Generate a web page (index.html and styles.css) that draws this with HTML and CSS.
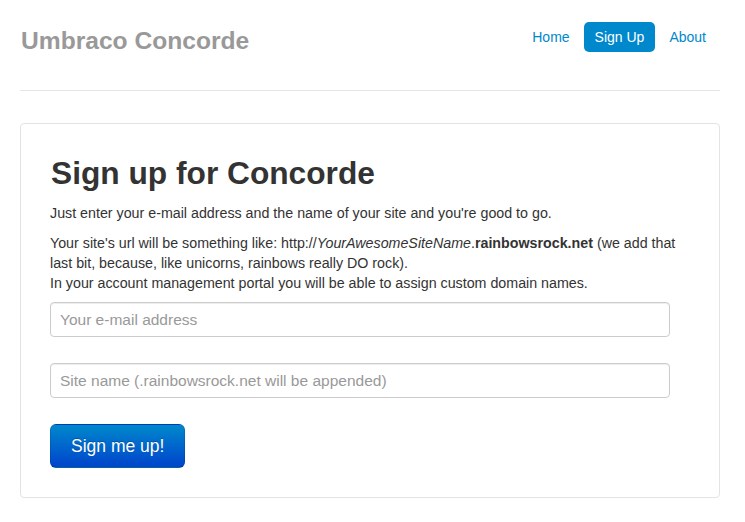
FILE: index.html
```html
<!DOCTYPE html>
<html>
<head>
<meta charset="utf-8">
<title>Umbraco Concorde</title>
<link rel="stylesheet" href="styles.css">
</head>
<body>
<div class="container">
  <header class="masthead">
    <h3 class="brand">Umbraco Concorde</h3>
    <ul class="nav-pills">
      <li><a href="#">Home</a></li>
      <li class="active"><a href="#">Sign Up</a></li>
      <li><a href="#">About</a></li>
    </ul>
  </header>
  <section class="card">
    <h2 class="title">Sign up for Concorde</h2>
    <p>Just enter your e-mail address and the name of your site and you're good to go.</p>
    <p>Your site's url will be something like: http://<em>YourAwesomeSiteName</em>.<strong>rainbowsrock.net</strong> (we add that last bit, because, like unicorns, rainbows really DO rock).<br>In your account management portal you will be able to assign custom domain names.</p>
    <form class="signup">
      <input class="field" type="text" placeholder="Your e-mail address">
      <input class="field" type="text" placeholder="Site name (.rainbowsrock.net will be appended)">
      <div><button class="btn-primary" type="button">Sign me up!</button></div>
    </form>
  </section>
</div>
</body>
</html>
```

FILE: styles.css
```css
* { box-sizing: border-box; }
html, body { margin: 0; padding: 0; background: #fff; }
body {
  font-family: "Liberation Sans", Arial, sans-serif;
  font-size: 14px;
  line-height: 20px;
  color: #333;
}
.container {
  width: 700px;
  margin-left: 20px;
}
.masthead {
  display: flex;
  justify-content: space-between;
  align-items: flex-start;
  padding: 21px 0 29px;
  border-bottom: 1px solid #e5e5e5;
}
.brand {
  margin: 0;
  font-size: 24.6px;
  line-height: 40px;
  font-weight: bold;
  color: #999;
  padding-left: 1px;
}
.nav-pills {
  list-style: none;
  margin: 1px 2px 0 0;
  padding: 0;
  display: flex;
}
.nav-pills li { margin-left: 2px; }
.nav-pills a {
  display: block;
  padding: 8px 12px;
  line-height: 14px;
  font-size: 14px;
  color: #0088cc;
  text-decoration: none;
  border-radius: 5px;
}
.nav-pills .active a {
  background: #0088cc;
  color: #fff;
  padding: 8px 11px;
}
.card {
  margin-top: 32px;
  border: 1px solid #e3e3e3;
  border-radius: 4px;
  background: #fff;
  padding: 29px;
}
.title {
  margin: 0 0 10px;
  padding-left: 1px;
  font-size: 31.7px;
  line-height: 40px;
  font-weight: bold;
  color: #333;
}
.card p { margin: 0 0 10px; font-size: 14.25px; }
.signup {
  display: flex;
  flex-direction: column;
  gap: 26px;
  margin-top: -1px;
}
.field {
  width: 620px;
  height: 35px;
  padding: 0 9px;
  border: 1px solid #ccc;
  border-radius: 4px;
  font-family: "Liberation Sans", Arial, sans-serif;
  font-size: 15.5px;
  color: #555;
  background: #fff;
  box-shadow: inset 0 1px 1px rgba(0,0,0,0.075);
}
.field::placeholder { color: #999; }
.btn-primary {
  display: inline-block;
  padding: 11px 20px;
  font-family: "Liberation Sans", Arial, sans-serif;
  font-size: 17.5px;
  line-height: 20px;
  color: #fff;
  text-shadow: 0 -1px 0 rgba(0,0,0,0.25);
  background: linear-gradient(to bottom, #0088cc, #0044cc);
  border: 1px solid #0044cc;
  border-color: rgba(0,0,0,0.1) rgba(0,0,0,0.1) rgba(0,0,0,0.25);
  border-radius: 6px;
  cursor: pointer;
}
```
